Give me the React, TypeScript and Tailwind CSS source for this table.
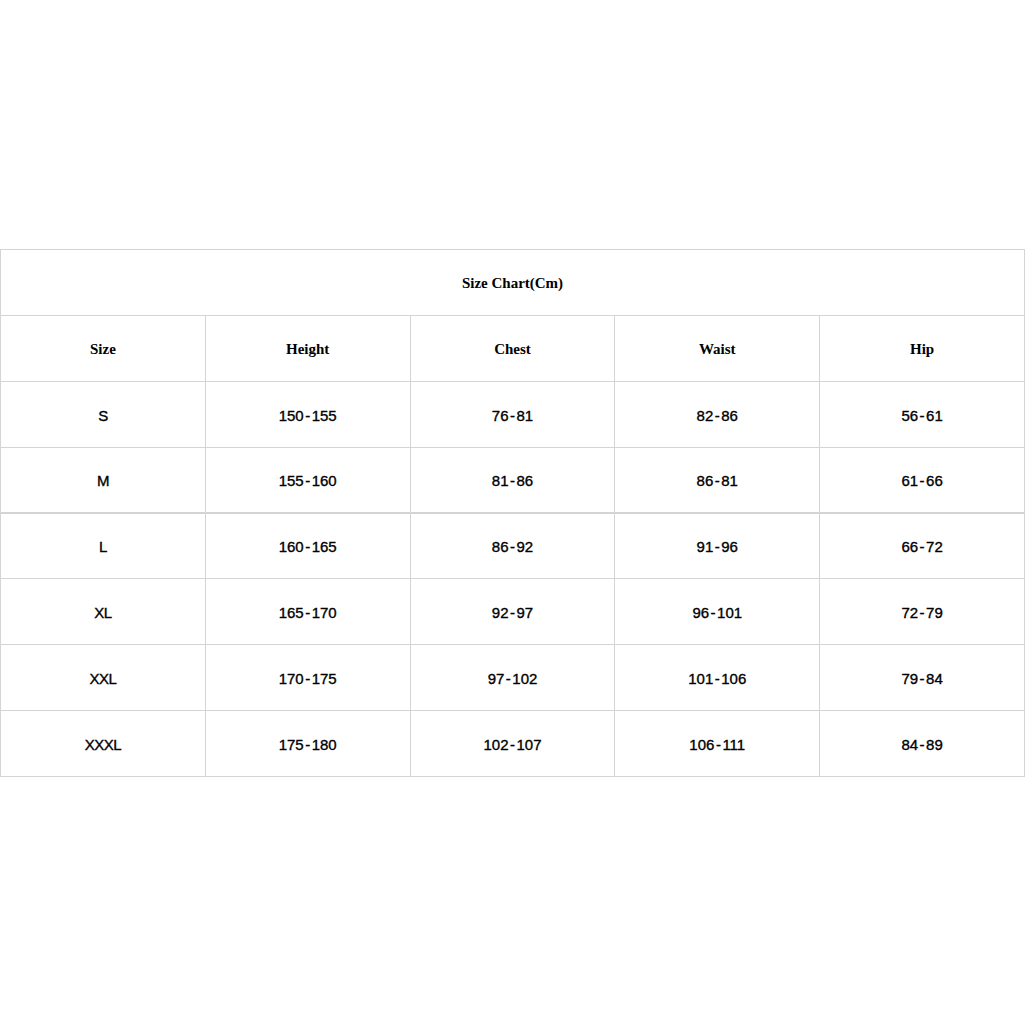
const headers = ['Size', 'Height', 'Chest', 'Waist', 'Hip'];

const rows = [
  ['S', '150-155', '76-81', '82-86', '56-61'],
  ['M', '155-160', '81-86', '86-81', '61-66'],
  ['L', '160-165', '86-92', '91-96', '66-72'],
  ['XL', '165-170', '92-97', '96-101', '72-79'],
  ['XXL', '170-175', '97-102', '101-106', '79-84'],
  ['XXXL', '175-180', '102-107', '106-111', '84-89'],
];

const serif = "font-['Liberation_Serif','Times_New_Roman',serif]";
const sans = "font-['Liberation_Sans',Arial,sans-serif]";

function Cell({ value }: { value: string }) {
  const parts = value.split('-');
  if (parts.length < 2) return <span className="tracking-[-0.5px]">{value}</span>;
  return (
    <span>
      {parts[0]}
      <span className="mx-[1.5px]">-</span>
      {parts[1]}
    </span>
  );
}

export default function App() {
  return (
    <div className="min-h-screen bg-white pt-[249px]">
      <div className="w-[1025px] border-t border-l border-[#d4d4d4] text-black">
        {/* Title */}
        <div className={`flex h-[66px] items-center justify-center border-r border-b border-[#d4d4d4] pt-[2px] text-[15px] font-bold ${serif}`}>
          Size Chart(Cm)
        </div>

        {/* Header */}
        <div className="grid grid-cols-5">
          {headers.map((h) => (
            <div
              key={h}
              className={`flex h-[66px] items-center justify-center border-r border-b border-[#d4d4d4] pt-[2px] text-[15px] font-bold ${serif}`}
            >
              {h}
            </div>
          ))}
        </div>

        {/* Rows */}
        {rows.map((row, i) => (
          <div key={row[0]} className="grid grid-cols-5">
            {row.map((cell, j) => (
              <div
                key={j}
                className={
                  i === 1
                    ? `flex h-[66px] items-center justify-center border-r border-b-2 border-[#d4d4d4] pt-[3px] text-[15px] [-webkit-text-stroke:0.35px_black] ${sans}`
                    : i === 2
                      ? `flex h-[65px] items-center justify-center border-r border-b border-[#d4d4d4] pt-[3px] text-[15px] [-webkit-text-stroke:0.35px_black] ${sans}`
                      : `flex h-[66px] items-center justify-center border-r border-b border-[#d4d4d4] pt-[3px] text-[15px] [-webkit-text-stroke:0.35px_black] ${sans}`
                }
              >
                <Cell value={cell} />
              </div>
            ))}
          </div>
        ))}
      </div>
    </div>
  );
}
